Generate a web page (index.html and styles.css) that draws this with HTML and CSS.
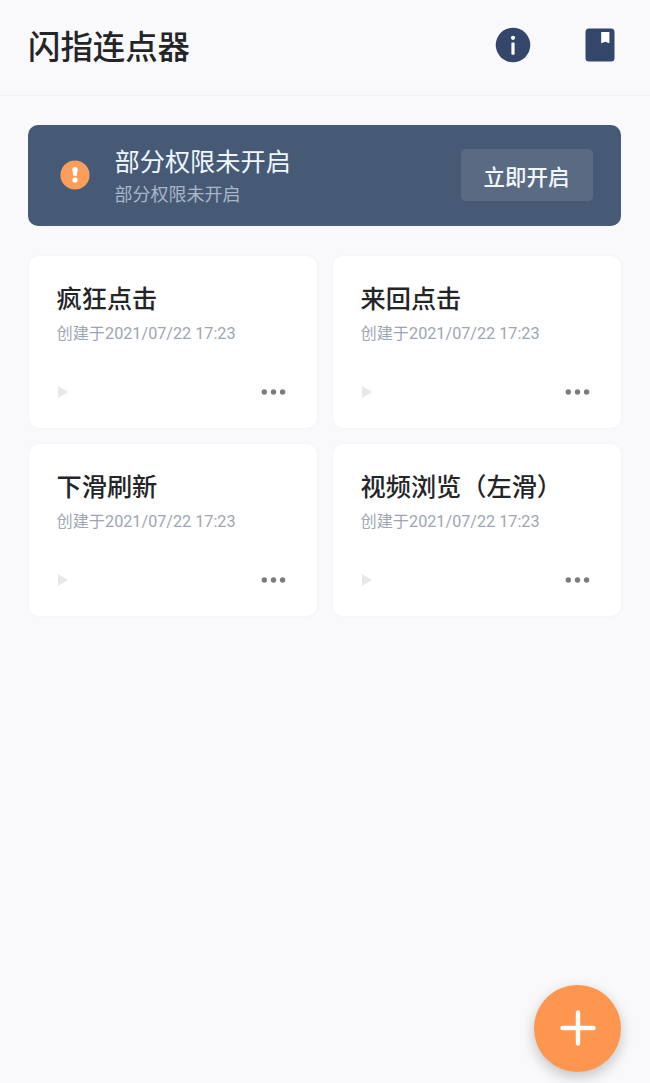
FILE: index.html
```html
<!DOCTYPE html>
<html lang="zh-CN">
<head>
    <meta charset="UTF-8">
    <meta name="viewport" content="width=device-width, initial-scale=1.0">
    <title>闪指连点器</title>
    <link rel="stylesheet" href="styles.css">
</head>
<body>

    <!-- Top bar -->
    <header class="header">
        <h1>闪指连点器</h1>
        <div class="header-icons">
            <svg class="icon-info" viewBox="0 0 36 36">
                <circle cx="18" cy="18" r="17.3" fill="#34476b"/>
                <circle cx="18" cy="10.8" r="2.1" fill="#fff"/>
                <rect x="16.4" y="15.4" width="3.2" height="12.4" rx="1" fill="#fff"/>
            </svg>
            <svg class="icon-book" viewBox="0 0 30 34">
                <rect x="0.5" y="0.5" width="29" height="33" rx="3.5" fill="#34476b"/>
                <path d="M16.2 4h8.2v11.2l-4.1-1.4-4.1 1.4z" fill="#fff"/>
            </svg>
        </div>
    </header>

    <main class="content">
        <!-- Permission banner -->
        <section class="banner">
            <svg class="icon-warn" viewBox="0 0 30 30">
                <circle cx="15" cy="15" r="14.6" fill="#fb9d5c"/>
                <path d="M12.3 9.2a2.7 2.2 0 0 1 5.4 0l-.9 6.6h-3.6z" fill="#fff"/>
                <circle cx="15" cy="19.9" r="2.6" fill="#fff"/>
            </svg>
            <div class="banner-text">
                <h2>部分权限未开启</h2>
                <p>部分权限未开启</p>
            </div>
            <button class="banner-btn">立即开启</button>
        </section>

        <!-- Script cards -->
        <section class="cards">
            <div class="card">
                <h3>疯狂点击</h3>
                <p class="date">创建于2021/07/22 17:23</p>
                <div class="card-actions">
                    <svg class="icon-play" viewBox="0 0 12 14"><path d="M1 1l10 6-10 6z"/></svg>
                    <svg class="icon-more" viewBox="0 0 26 6"><circle cx="3.3" cy="3" r="2.7"/><circle cx="12.5" cy="3" r="2.7"/><circle cx="21.6" cy="3" r="2.7"/></svg>
                </div>
            </div>
            <div class="card">
                <h3>来回点击</h3>
                <p class="date">创建于2021/07/22 17:23</p>
                <div class="card-actions">
                    <svg class="icon-play" viewBox="0 0 12 14"><path d="M1 1l10 6-10 6z"/></svg>
                    <svg class="icon-more" viewBox="0 0 26 6"><circle cx="3.3" cy="3" r="2.7"/><circle cx="12.5" cy="3" r="2.7"/><circle cx="21.6" cy="3" r="2.7"/></svg>
                </div>
            </div>
            <div class="card">
                <h3>下滑刷新</h3>
                <p class="date">创建于2021/07/22 17:23</p>
                <div class="card-actions">
                    <svg class="icon-play" viewBox="0 0 12 14"><path d="M1 1l10 6-10 6z"/></svg>
                    <svg class="icon-more" viewBox="0 0 26 6"><circle cx="3.3" cy="3" r="2.7"/><circle cx="12.5" cy="3" r="2.7"/><circle cx="21.6" cy="3" r="2.7"/></svg>
                </div>
            </div>
            <div class="card">
                <h3>视频浏览（左滑）</h3>
                <p class="date">创建于2021/07/22 17:23</p>
                <div class="card-actions">
                    <svg class="icon-play" viewBox="0 0 12 14"><path d="M1 1l10 6-10 6z"/></svg>
                    <svg class="icon-more" viewBox="0 0 26 6"><circle cx="3.3" cy="3" r="2.7"/><circle cx="12.5" cy="3" r="2.7"/><circle cx="21.6" cy="3" r="2.7"/></svg>
                </div>
            </div>
        </section>
    </main>

    <!-- Add button -->
    <button class="fab" aria-label="添加">
        <svg viewBox="0 0 36 36">
            <path d="M18 2.5v31M2.5 18h31" stroke="#fff" stroke-width="4.4" stroke-linecap="round"/>
        </svg>
    </button>

</body>
</html>
```

FILE: styles.css
```css
* {
    box-sizing: border-box;
}

body {
    font-family: Roboto, "Noto Sans CJK SC", sans-serif;
    background-color: #f9f9fb;
    color: #242528;
    margin: 0;
    min-height: 100vh;
    overflow: hidden;
}

h1, h2, h3, p {
    margin: 0;
}

svg {
    display: block;
}

/* Top bar */
.header {
    display: flex;
    justify-content: space-between;
    align-items: center;
    height: 96px;
    padding: 0 35.5px 6px 28px;
    border-bottom: 1px solid #f3f3f5;
}

.header h1 {
    font-size: 32.4px;
    font-weight: 500;
    line-height: 48px;
    padding-top: 6px;
}

.header-icons {
    display: flex;
    align-items: center;
    gap: 54px;
}

.icon-info {
    width: 36px;
    height: 36px;
}

.icon-book {
    width: 30px;
    height: 34px;
}

.content {
    padding: 29px 29.5px 0 27.5px;
}

/* Permission banner */
.banner {
    display: flex;
    align-items: center;
    height: 101px;
    padding: 0 28px 1px 32px;
    background-color: #465a75;
    border-radius: 10px;
}

.icon-warn {
    width: 30px;
    height: 30px;
}

.banner-text {
    flex: 1;
    margin-left: 25px;
    padding-top: 3px;
}

.banner-text h2 {
    color: #f0f6fd;
    font-size: 25.2px;
    font-weight: 400;
    line-height: 36px;
}

.banner-text p {
    color: #a9b5c8;
    font-size: 18px;
    line-height: 28px;
}

.banner-btn {
    width: 132px;
    height: 52px;
    padding: 0;
    border: 0;
    border-radius: 5px;
    background-color: #5a6a83;
    color: #f3f8fd;
    font-family: inherit;
    font-size: 21.5px;
    font-weight: 500;
}

/* Script cards */
.cards {
    display: grid;
    grid-template-columns: 1fr 1fr;
    gap: 16.5px 16px;
    margin: 30px 0 0 1px;
}

.card {
    height: 171.5px;
    padding: 26px 30px 0 28px;
    background-color: #fff;
    border-radius: 10px;
    box-shadow: 0 0 3px rgba(60, 60, 90, 0.05);
}

.card h3 {
    font-size: 25.2px;
    font-weight: 500;
    line-height: 36px;
    white-space: nowrap;
}

.date {
    color: #9ea6b2;
    font-size: 16.2px;
    line-height: 24px;
    margin-top: 4px;
}

.card-actions {
    display: flex;
    justify-content: space-between;
    align-items: center;
    margin-top: 39px;
}

.icon-play {
    width: 12px;
    height: 14px;
    fill: #e8e8e9;
}

.icon-more {
    width: 26px;
    height: 6px;
    fill: #7c7c7e;
}

/* Add button */
.fab {
    position: absolute;
    right: 29px;
    bottom: 11.5px;
    display: flex;
    justify-content: center;
    align-items: center;
    width: 87px;
    height: 87px;
    padding: 0;
    border: 0;
    border-radius: 50%;
    background-color: #fe9650;
    box-shadow: 0 5px 14px rgba(0, 0, 0, 0.22);
}

.fab svg {
    width: 36px;
    height: 36px;
}
```
